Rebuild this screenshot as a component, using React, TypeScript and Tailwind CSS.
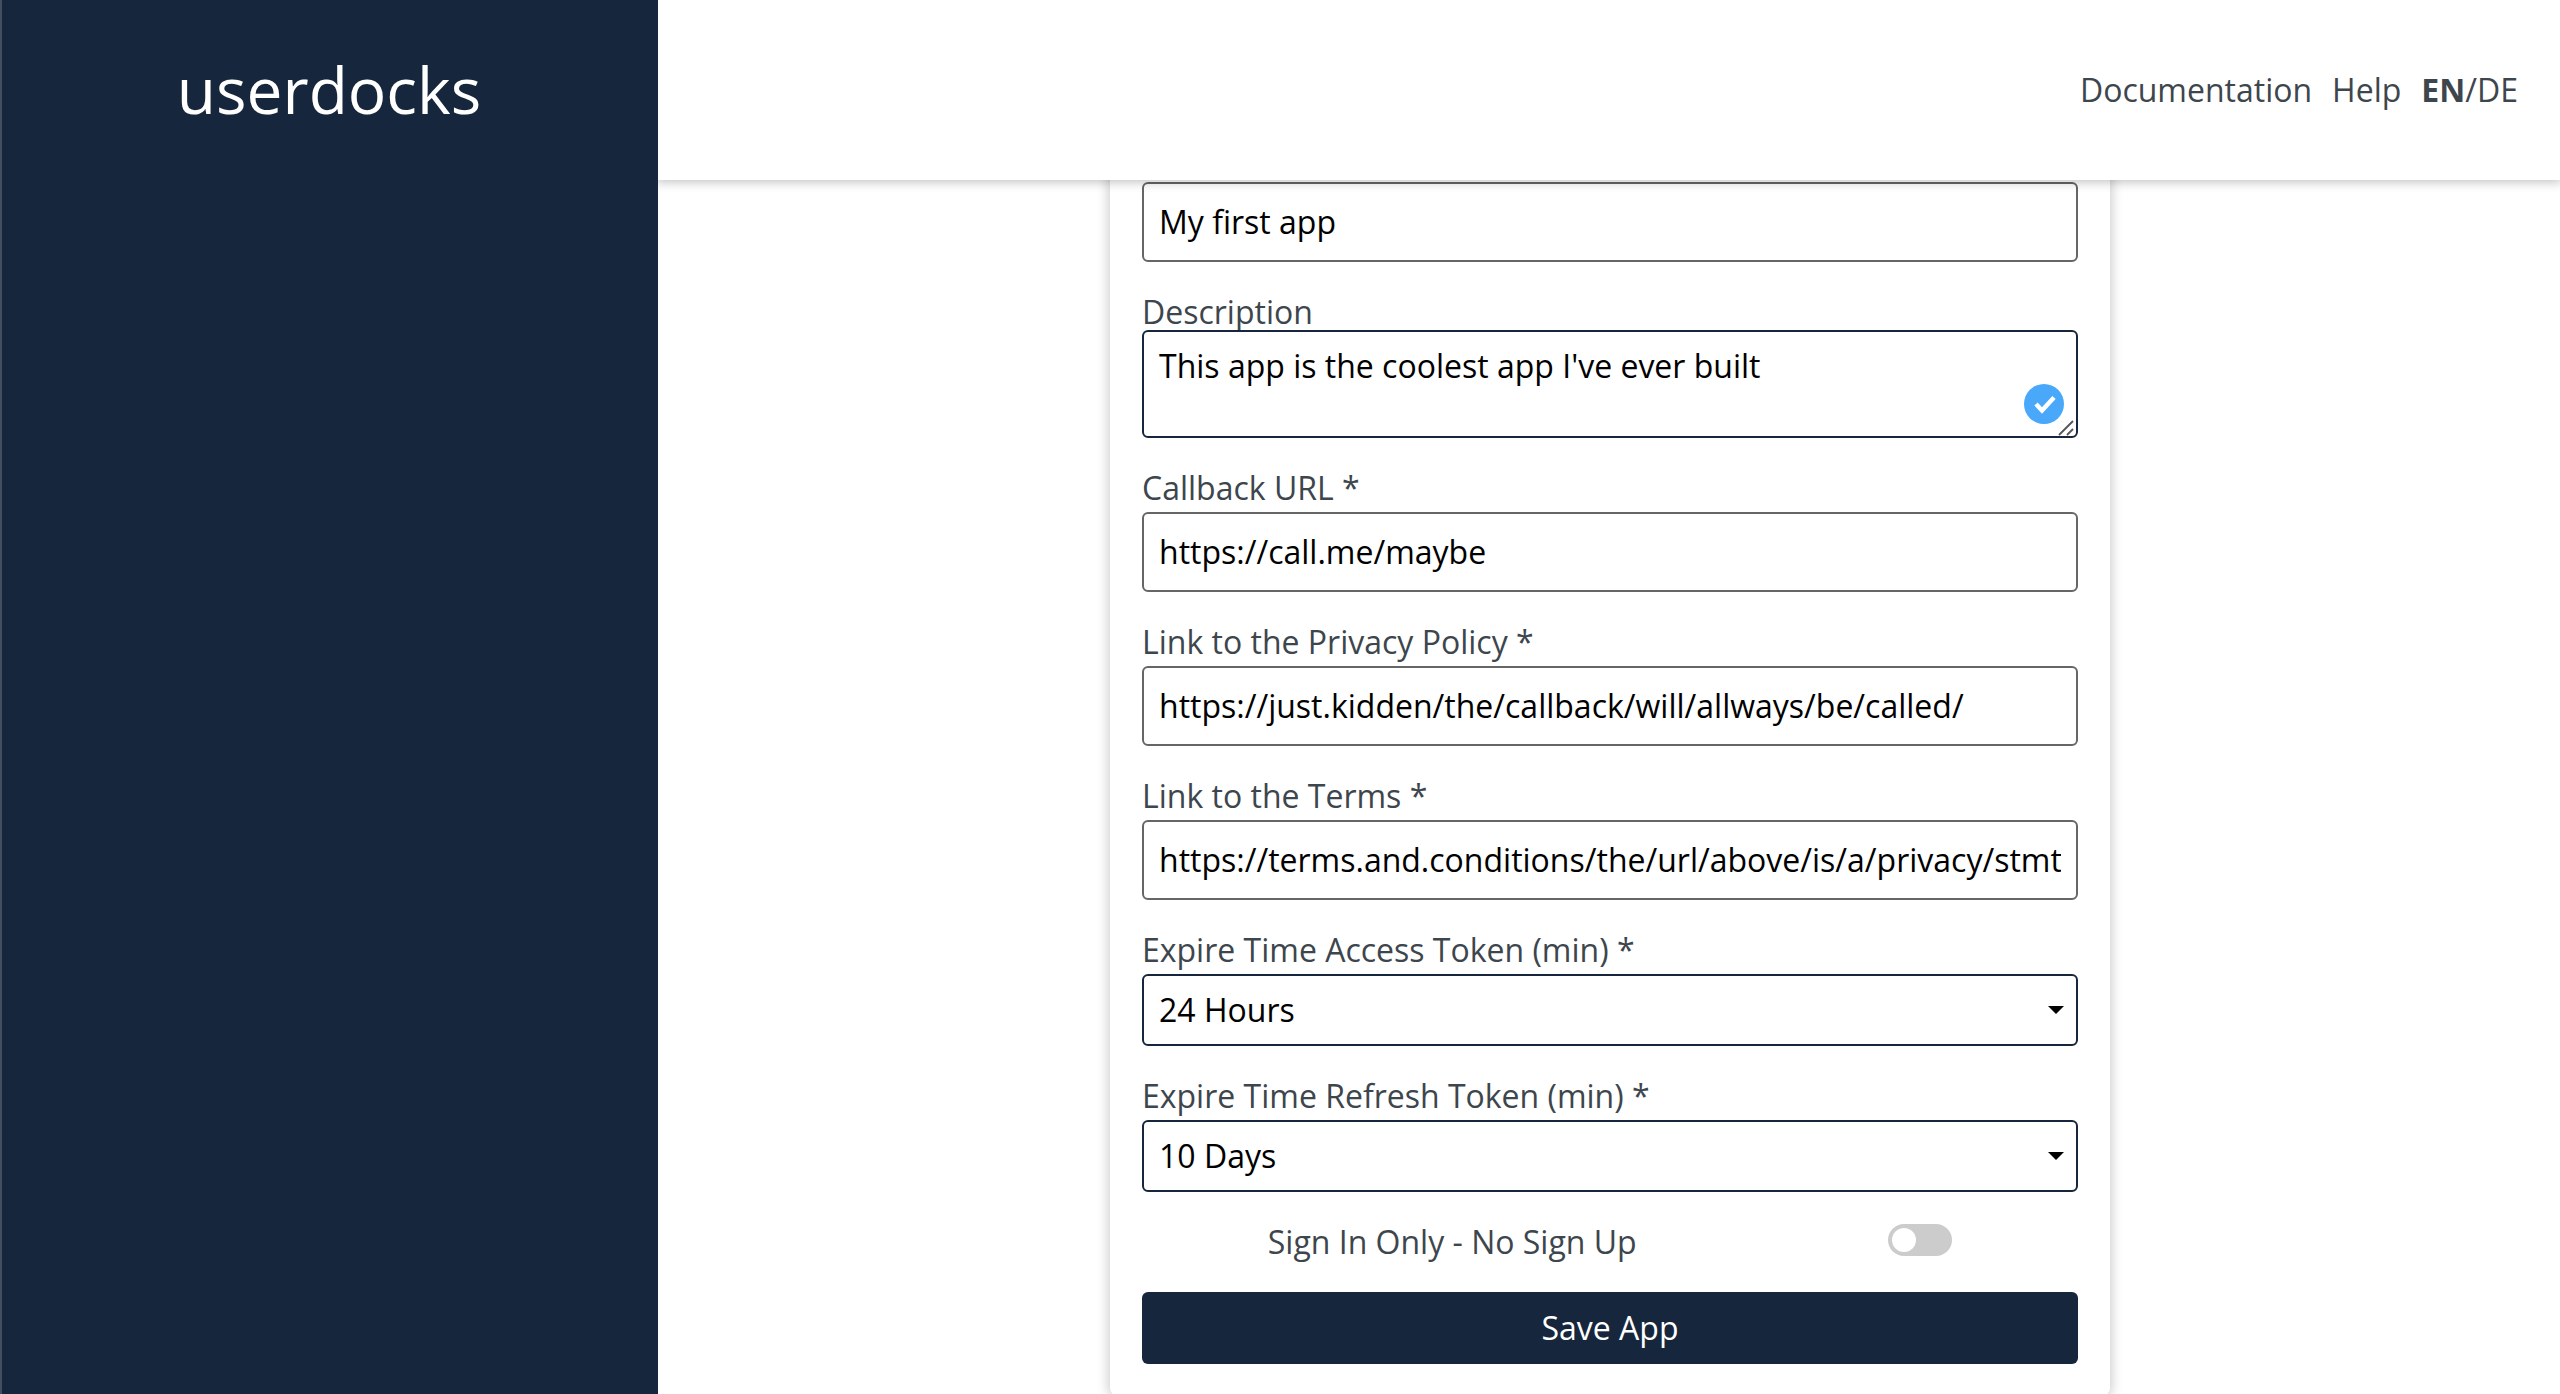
import { useState } from 'react';
import type { ReactNode } from 'react';

const control =
  'block w-full rounded-md border-2 bg-white px-[15px] text-[32px] leading-[44px] text-black outline-none';

function Field({ id, label, children }: { id: string; label: string; children: ReactNode }) {
  return (
    <div className="mt-7">
      <label htmlFor={id} className="mb-0.5 block leading-[44px]">
        {label}
      </label>
      {children}
    </div>
  );
}

function TextField({ id, label, value }: { id: string; label: string; value: string }) {
  return (
    <Field id={id} label={label}>
      <input id={id} type="text" defaultValue={value} className={`${control} h-20 border-[#666666] pb-0.5`} />
    </Field>
  );
}

function SelectField({ id, label, options }: { id: string; label: string; options: string[] }) {
  return (
    <Field id={id} label={label}>
      <div className="relative">
        <select id={id} className={`${control} h-[72px] appearance-none border-[#16263c]`}>
          {options.map((option) => (
            <option key={option}>{option}</option>
          ))}
        </select>
        <svg
          className="pointer-events-none absolute right-3.5 top-8 h-2 w-4"
          viewBox="0 0 16 8"
          aria-hidden="true"
        >
          <path d="M0 0h16L8 8z" fill="#000" />
        </svg>
      </div>
    </Field>
  );
}

export default function App() {
  const [signInOnly, setSignInOnly] = useState(false);

  return (
    <div className="flex h-screen overflow-hidden bg-white font-['Open_Sans',sans-serif] text-[32px] leading-[44px] text-[#3d464d]">
      <aside className="z-20 w-[658px] shrink-0 border-l-2 border-[#434f61] bg-[#16263c]">
        <div className="flex h-[180px] items-center justify-center pr-0.5 text-[64px] leading-[88px] text-white">
          userdocks
        </div>
      </aside>

      <div className="flex min-w-0 flex-1 flex-col">
        <header className="z-10 flex h-[180px] shrink-0 items-center justify-end gap-5 bg-white px-[42px] shadow-[0_0_10px_2px_rgba(0,0,0,0.25)]">
          <a href="#documentation">Documentation</a>
          <a href="#help">Help</a>
          <div>
            <button type="button" className="font-bold">
              EN
            </button>
            /<button type="button">DE</button>
          </div>
        </header>

        <main className="flex-1 pl-0.5">
          <form
            className="mx-auto -mt-8 w-[1000px] rounded-lg bg-white px-8 pt-[34px] pb-8 shadow-[0_0_12px_2px_rgba(0,0,0,0.2)]"
            onSubmit={(event) => event.preventDefault()}
          >
            <input
              type="text"
              aria-label="App Name"
              defaultValue="My first app"
              className={`${control} h-20 border-[#666666] pb-0.5`}
            />

            <div className="mt-7">
              <label htmlFor="description" className="-mb-1 block leading-[44px]">
                Description
              </label>
              <div className="relative">
                <textarea
                  id="description"
                  defaultValue="This app is the coolest app I've ever built"
                  className={`${control} h-[108px] resize-none border-[#16263c] py-3`}
                />
                <svg
                  className="pointer-events-none absolute right-3.5 bottom-3.5 size-10"
                  viewBox="0 0 40 40"
                  aria-hidden="true"
                >
                  <circle cx="20" cy="20" r="20" fill="#4aa8fa" />
                  <path d="M12 20l6 6.500L30 13.500" fill="none" stroke="#fff" strokeWidth="4.500" />
                </svg>
                <svg
                  className="pointer-events-none absolute right-1 bottom-0.5 size-4"
                  viewBox="0 0 16 16"
                  aria-hidden="true"
                >
                  <path d="M1 15L15 1M9 15l6-6" fill="none" stroke="#555" strokeWidth="1.800" />
                </svg>
              </div>
            </div>

            <TextField id="callback" label="Callback URL *" value="https://call.me/maybe" />
            <TextField
              id="privacy"
              label="Link to the Privacy Policy *"
              value="https://just.kidden/the/callback/will/allways/be/called/"
            />
            <TextField
              id="terms"
              label="Link to the Terms *"
              value="https://terms.and.conditions/the/url/above/is/a/privacy/stmt"
            />
            <SelectField
              id="access"
              label="Expire Time Access Token (min) *"
              options={['24 Hours', '12 Hours', '1 Hour']}
            />
            <SelectField
              id="refresh"
              label="Expire Time Refresh Token (min) *"
              options={['10 Days', '20 Days', '30 Days']}
            />

            <div className="my-7 flex items-start justify-around">
              <label htmlFor="sign-in-only">Sign In Only - No Sign Up</label>
              <input
                id="sign-in-only"
                type="checkbox"
                role="switch"
                checked={signInOnly}
                onChange={(event) => setSignInOnly(event.target.checked)}
                className="mt-1 flex h-8 w-16 appearance-none items-center rounded-full bg-[#cccccc] px-1 before:size-6 before:rounded-full before:bg-white checked:justify-end checked:bg-[#16263c]"
              />
            </div>

            <button type="submit" className="block h-[72px] w-full rounded-md bg-[#16263c] text-white">
              Save App
            </button>
          </form>
        </main>
      </div>
    </div>
  );
}
